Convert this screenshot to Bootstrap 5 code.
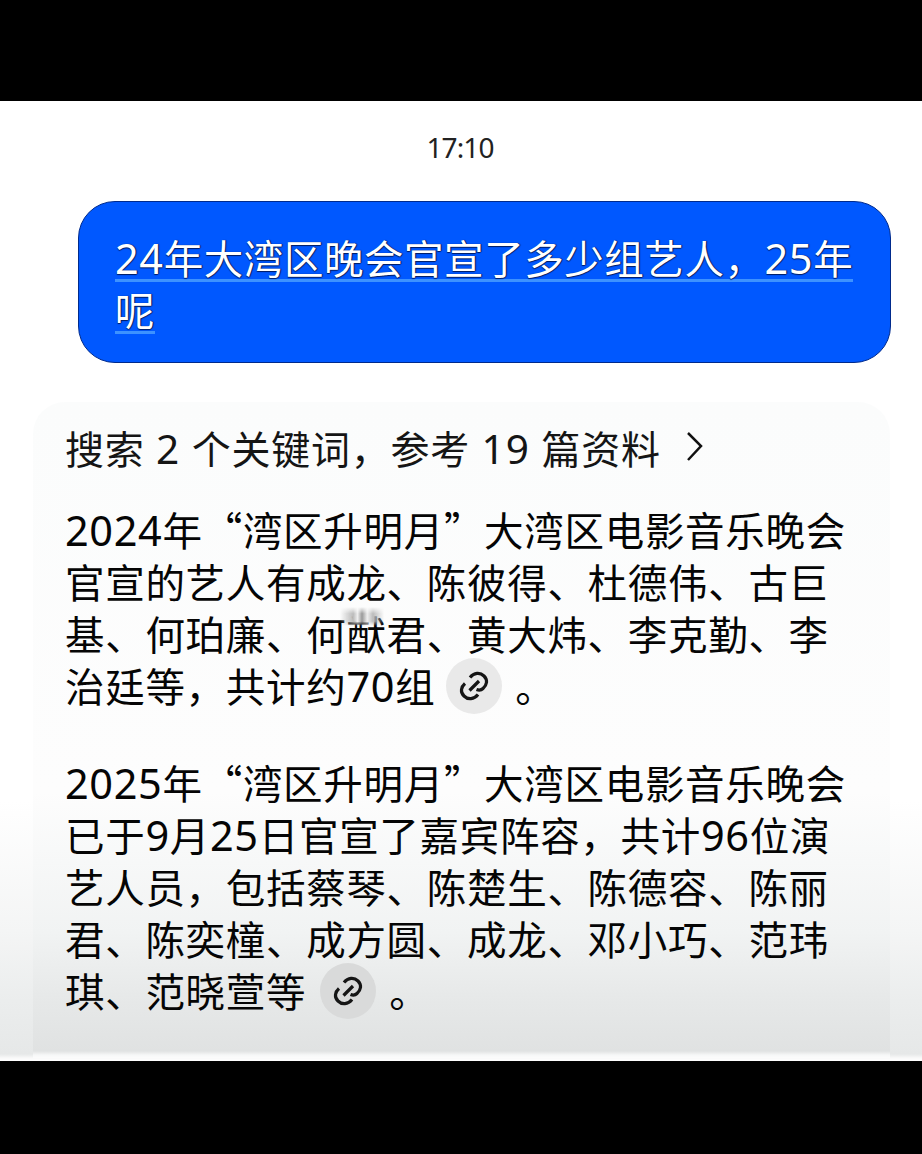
<!DOCTYPE html>
<html lang="zh-CN">
<head>
<meta charset="utf-8">
<meta name="viewport" content="width=device-width, initial-scale=1">
<title>对话</title>
<link href="https://cdn.jsdelivr.net/npm/bootstrap@5.3.0/dist/css/bootstrap.min.css" rel="stylesheet">
<style>
body{background:#000;font-family:"Noto Sans CJK SC",sans-serif;color:#050505}
.screen{height:1154px;padding:101px 0 93px}
.chat{height:960px;background:linear-gradient(#fff 0,#fff 700px,#f4f5f5 830px,#ebeded 900px,#e6e8e8 953px,#f9f9f9 957px,#fff)}
.stamp{font:28px/40px "Noto Sans",sans-serif;letter-spacing:-.9px;padding:26px 2px 0 0;color:#222}
.bubble{width:813px;height:162px;margin:34px 31px 0 0;padding:29px 0 0 36px;border:1px solid #002a8c;border-radius:37px;background:#0058ff;color:#fff;text-shadow:0 1px 1px #001b60,1px 0 1px #001b60}
.line{font-size:39.5px;line-height:52px;height:52px;letter-spacing:.7px;white-space:nowrap}
.bubble .line{letter-spacing:.55px}
.under{background:linear-gradient(#3d92ff,#3d92ff) 0 51px/100% 3px no-repeat}
.num{font-family:"Noto Sans",sans-serif;font-size:1.05em;line-height:0;letter-spacing:.65px}
.answer{width:857px;height:656px;margin:39px 0 0 33px;padding:19px 0 0 32px;border-radius:32px 32px 0 0;background:linear-gradient(#fbfcfc 0,#fdfdfd 390px,#f1f3f3 530px,#e6e8e8 600px,#e0e2e2 649px,#f6f7f7 653px,#fcfcfc)}
.answer .refs{font-size:39px;letter-spacing:.75px;color:#151515}
.refs .num{font-size:1.04em;letter-spacing:1px}
.gap-a{margin-top:30px}.gap-b{margin-top:45px}
.source{width:56px;height:56px;background:#e9e9e9;margin:2px 13px 0 11px}
.source.deep{background:#d9dada;margin-left:14px;margin-top:2px}
.smudge{position:relative}
.smudge::after{content:"";position:absolute;left:-6px;top:3px;width:44px;height:19px;background:linear-gradient(90deg,#fdfdfd00,#bbb 30%,#eee 40%,#999 50%,#eee 62%,#bbb 75%,#fdfdfd00);-webkit-mask:linear-gradient(transparent,#000 35%,#000 75%,transparent);mask:linear-gradient(transparent,#000 35%,#000 75%,transparent)}
</style>
</head>
<body>
<main class="screen">
<div class="chat d-flex flex-column">
  <div class="stamp text-center">17:10</div>
  <div class="bubble align-self-end flex-shrink-0">
    <div class="line"><span class="under"><span class="num">24</span>年大湾区晚会官宣了多少组艺人，<span class="num">25</span>年</span></div>
    <div class="line"><span class="under">呢</span></div>
  </div>
  <section class="answer flex-shrink-0">
    <div class="line refs d-flex align-items-center"><span>搜索<span class="num"> 2 </span>个关键词，参考<span class="num"> 19 </span>篇资料</span>
      <svg class="ms-4" width="20" height="32" viewBox="0 0 20 32" fill="none" stroke="#111" stroke-width="2.5"><path d="M3 2 16 15 3 29"/></svg>
    </div>
    <div class="gap-a">
      <div class="line"><span class="num">2024</span>年“湾区升明月”大湾区电影音乐晚会</div>
      <div class="line">官宣的艺人有成龙、陈彼得、杜德伟、古巨</div>
      <div class="line">基、何珀廉、何<span class="smudge">猷</span>君、黄大炜、李克勤、李</div>
      <div class="line d-flex align-items-center"><span>治廷等，共计约<span class="num">70</span>组</span><span class="source rounded-circle d-flex align-items-center justify-content-center"><svg width="32" height="32" viewBox="-16 -16 32 32" fill="none" stroke="#151515" stroke-width="3.2"><path d="M-4-8.5C0-13.5 6-14 10-10C14-6 13-1 9 2.500C7.500 4 5 4.500 2.500 3.500M4 8.500C0 13.500-6 14-10 10C-14 6-13 1-9-2.500M-4.500 4.500 5-5"/></svg></span><span>。</span></div>
    </div>
    <div class="gap-b">
      <div class="line"><span class="num">2025</span>年“湾区升明月”大湾区电影音乐晚会</div>
      <div class="line">已于<span class="num">9</span>月<span class="num">25</span>日官宣了嘉宾阵容，共计<span class="num">96</span>位演</div>
      <div class="line">艺人员，包括蔡琴、陈楚生、陈德容、陈丽</div>
      <div class="line">君、陈奕橦、成方圆、成龙、邓小巧、范玮</div>
      <div class="line d-flex align-items-center"><span>琪、范晓萱等</span><span class="source deep rounded-circle d-flex align-items-center justify-content-center"><svg width="32" height="32" viewBox="-16 -16 32 32" fill="none" stroke="#151515" stroke-width="3.2"><path d="M-4-8.5C0-13.5 6-14 10-10C14-6 13-1 9 2.500C7.500 4 5 4.500 2.500 3.500M4 8.500C0 13.500-6 14-10 10C-14 6-13 1-9-2.500M-4.500 4.500 5-5"/></svg></span><span>。</span></div>
    </div>
  </section>
</div>
</main>
<script src="https://cdn.jsdelivr.net/npm/bootstrap@5.3.0/dist/js/bootstrap.bundle.min.js"></script>
</body>
</html>
